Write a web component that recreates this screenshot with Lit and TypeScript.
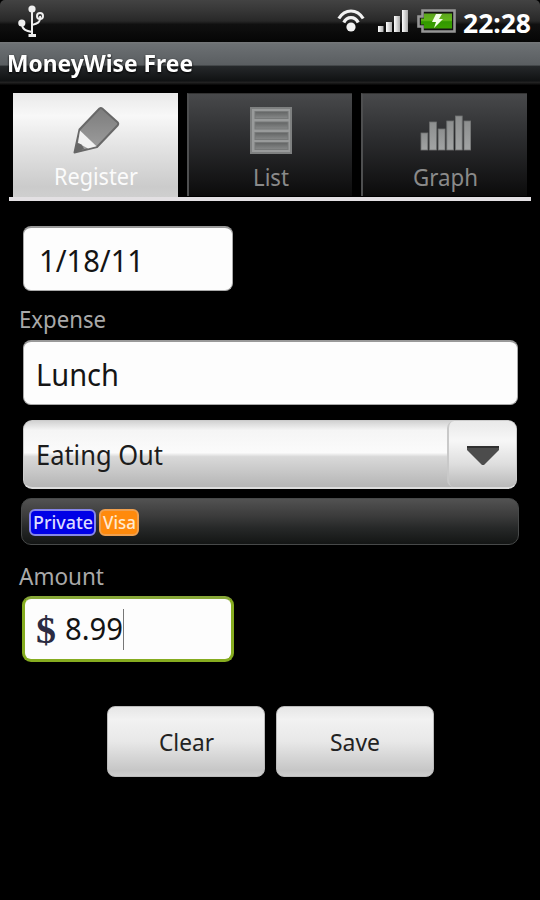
import { LitElement, html, css, svg } from "lit";
import { customElement, property } from "lit/decorators.js";

/** One line of text set to a given advance width; the box is cap-height tall. */
@customElement("fit-label")
class FitLabel extends LitElement {
  @property() text = "";
  @property({ type: Number }) width = 0;
  @property({ type: Number }) size = 24;

  static styles = css`
    :host { display: block; flex: none; line-height: 0; }
    svg { display: block; overflow: visible; }
    text { fill: currentColor; }
  `;

  render() {
    const cap = Math.round(this.size * 0.72);
    return html`<svg width=${this.width} height=${cap}>
      <text x="0" y=${cap} font-size=${this.size} textLength=${this.width} lengthAdjust="spacingAndGlyphs">${this.text}</text>
    </svg>`;
  }
}

const label = (text: string, width: number, size: number) =>
  html`<fit-label .text=${text} .width=${width} .size=${size}></fit-label>`;

@customElement("app-root")
export class AppRoot extends LitElement {
  static styles = css`
    :host {
      display: block; width: 540px; height: 900px; background: #000; overflow: hidden;
      font-family: "Noto Sans", "Open Sans", sans-serif;
    }
    * { box-sizing: border-box; }
    svg { display: block; flex: none; }
    .status {
      height: 42px; display: flex; align-items: center; padding: 0 9px 0 18px;
      border-radius: 5px 5px 0 0; color: #fff; font-weight: 700;
      background: linear-gradient(#434343 0, #373737 24%, #282828 50%, #101010 58%, #050505 100%);
    }
    .spacer { flex: 1; }
    .clock { padding: 4px 0 0 7px; }
    .title {
      height: 43px; display: flex; align-items: center; padding: 0 8px 0 7px; color: #fff; font-weight: 700;
      background: linear-gradient(#77797b 0, #6c7073 5%, #5a5e61 53%, #25282a 57%, #101213 90%, #222 94%, #050505 100%);
      filter: none;
    }
    .title fit-label { filter: drop-shadow(0 1px 1px #000); }
    .tabs {
      margin: 8px 9px 0; height: 108px; padding: 0 4px; display: flex; gap: 9px;
      border-bottom: 4px solid #e3e0e3;
    }
    .tab {
      flex: 1; height: 103px; display: flex; flex-direction: column; align-items: center; color: #8a8a8a;
      background: linear-gradient(#48494b, #2d2e30 42%, #141415 85%, #0b0b0b);
      border-top: 1px solid #333; border-left: 2px solid #4e4f50;
    }
    .tab.active {
      height: 104px; color: #fbfbfb; border: 0; padding-left: 1px;
      background: linear-gradient(#e9e9e9, #f8f8f8 22%, #e8e8e8 45%, #cbcbcb 90%, #cfcfcf);
    }
    .tab .icon { height: 75px; padding-top: 12px; }
    .form { padding: 25px 21px 0 22px; display: flex; flex-direction: column; }
    .field {
      height: 65px; margin-left: 1px; display: flex; align-items: center; background: #fdfdfd; color: #141414;
      border: 1px solid #a9a9a9; border-top: 2px solid #999; border-radius: 8px; padding: 3px 0 0 12px;
    }
    .short { width: 210px; padding-left: 15px; }
    .wide { width: 495px; }
    .caption { margin-left: -3px; color: #a9a9a9; }
    .expense { padding: 20px 0 12px; }
    .amount { padding: 23px 0 11px; }
    .select {
      margin: 15px 0 0 1px; width: 494px; height: 69px; display: flex; border-radius: 9px; overflow: hidden;
      border: 1px solid #ccc; border-bottom: 2px solid #dcdcdc; color: #1c1c1c;
      background: linear-gradient(#d2d2d2 0, #f5f5f5 14%, #fbfbfb 48%, #d9d9d9 54%, #b5b5b5 100%);
    }
    .value { flex: 1; display: flex; align-items: center; padding: 2px 0 0 12px; }
    .arrow {
      width: 69px; display: flex; align-items: center; justify-content: center; padding-top: 3px;
      border-left: 2px solid #c9c9c9; border-radius: 7px 0 0 7px;
      background: linear-gradient(#e9e9e9, #f7f7f7 30%, #dedede 65%, #b9b9b9);
    }
    .tags {
      margin: 9px 0 0 -1px; width: 498px; height: 47px; display: flex; gap: 3px; padding: 10px 0 0 7px;
      border: 1px solid #474949; border-radius: 10px;
      background: linear-gradient(#525252, #3b3b3b 38%, #262828 65%, #131514);
    }
    .tag {
      height: 27px; display: flex; align-items: center; justify-content: center; border-radius: 6px; font-weight: 500;
    }
    .private { width: 67px; background: #0000e6; border: 2px solid #8686e8; color: #dcdcff; }
    .visa { width: 40px; background: #ff8a0c; border: 2px solid #f0a04e; color: #ffe9d0; }
    .focused {
      margin-left: 0; width: 212px; height: 66px; border: 3px solid #86ac20; border-top-color: #88a838;
      padding: 0 0 0 11px; border-radius: 9px;
    }
    .dollar { font-family: "Liberation Serif", serif; font-weight: 700; color: #2b2b42; margin-right: 9px; padding-top: 0; }
    .caret { width: 1px; height: 41px; background: #777; }
    .actions { display: flex; gap: 11px; padding: 44px 0 0 85px; }
    .button {
      width: 158px; height: 71px; display: flex; align-items: center; justify-content: center; color: #222;
      border: 1px solid #bbb; border-radius: 8px; padding-top: 1px;
      background: linear-gradient(#e6e6e6, #f2f2f2 18%, #e8e8e8 50%, #c6c6c6 92%, #cecece);
    }
  `;

  private usb = svg`<svg width="27" height="34" viewBox="0 0 27 34" fill="none" stroke="#eee" stroke-width="2">
    <path d="M14 5V31M4 20C4 26 9 27 14 28M22 12C23 19 18 20 14 21" />
    <circle cx="14" cy="5" r="3.6" fill="#eee" stroke="none"/>
    <circle cx="3.8" cy="19" r="3.6" fill="#eee" stroke="none"/>
    <circle cx="22" cy="12" r="3"/>
    <path d="M10.5 31.5h7.5" stroke-width="3"/>
  </svg>`;

  private wifi = svg`<svg width="28" height="24" viewBox="0 0 28 24" fill="none" stroke="#f2f2f2" stroke-width="3.2">
    <path d="M1.8 9.5C8 -0.5 20 -0.5 26.2 9.5"/>
    <path d="M6.8 13.5C10 7 18 7 21.2 13.5"/>
    <circle cx="14" cy="18" r="4.6" fill="#f2f2f2" stroke="none"/>
  </svg>`;

  private signal = svg`<svg width="31" height="24" viewBox="0 0 31 24">
    <defs><linearGradient id="s" x1="0" x2="1"><stop offset="0" stop-color="#fff"/><stop offset="1" stop-color="#aaa"/></linearGradient></defs>
    <path fill="url(#s)" d="M0 17h5.5v6H0z"/><path fill="url(#s)" d="M8 13h6v10H8z"/>
    <path fill="url(#s)" d="M16 7h6v16h-6z"/><path fill="url(#s)" d="M24 1h6v22h-6z"/>
  </svg>`;

  private battery = svg`<svg width="39" height="24" viewBox="0 0 39 24">
    <defs><linearGradient id="b" x2="0" y2="1"><stop offset="0" stop-color="#5ca51c"/><stop offset=".45" stop-color="#62b61a"/><stop offset=".55" stop-color="#329800"/><stop offset="1" stop-color="#3ba000"/></linearGradient></defs>
    <path d="M5.5 1.5H37.5V22.5H5.5V17.5H1.5V7.5H5.5Z" fill="#131313" stroke="#969696" stroke-width="2.6"/>
    <path d="M7 4.5H35V19.5H7V15.5H4V9.5H7Z" fill="url(#b)"/>
    <path d="M19 5h6l-3 5h4l-9 9 2-6h-4z" fill="#f4ffe8"/>
  </svg>`;

  private pencil = svg`<svg width="48" height="50" viewBox="0 0 48 50">
    <defs>
      <linearGradient id="p" x2="0" y2="1"><stop offset="0" stop-color="#7c7c7c"/><stop offset="1" stop-color="#a0a0a0"/></linearGradient>
    </defs>
    <path d="M7.5 24.5L27.5 3.5Q29 2.5 30.5 3.8L45.8 17.5Q46.8 19 45.5 20.5L25 42L2.5 47.5Z" fill="url(#p)" stroke="#686868" stroke-width="2" stroke-linejoin="round"/>
    <path d="M8 25.5L24.5 41.2L16 43.5L6 38Z" fill="#f1f1f1"/>
    <path d="M5 38Q10 38 12 44L2.5 47.5Z" fill="#666"/>
  </svg>`;

  private list = svg`<svg width="42" height="48" viewBox="0 0 42 48">
    <defs><linearGradient id="r" x2="0" y2="1"><stop offset="0" stop-color="#626464"/><stop offset="1" stop-color="#878989"/></linearGradient></defs>
    <path d="M1 2H41V47H1Z" fill="#999b9b" stroke="#7e8080" stroke-width="2"/>
    ${[5.5, 16, 26.5, 36.5].map((y) => svg`<rect x="5" y=${y} width="33" height="7" fill="url(#r)" stroke="#777979" stroke-width="1"/>`)}
  </svg>`;

  private graph = svg`<svg width="51" height="48" viewBox="0 0 51 48">
    <defs><linearGradient id="g" x2="0" y2="1"><stop offset="0" stop-color="#8d8f8f"/><stop offset="1" stop-color="#a2a4a4"/></linearGradient></defs>
    ${[27, 16, 23, 15, 10, 15].map((y, i) => svg`<rect x=${1 + i * 8.6} y=${y} width="6.8" height=${44 - y} fill="url(#g)" stroke="#707272" stroke-width=".8"/>`)}
  </svg>`;

  render() {
    return html`
      <div class="status">
        ${this.usb}<span class="spacer"></span>
        <svg width="41" height="24">${this.wifi}</svg>
        ${this.signal}<svg width="8" height="24"></svg>${this.battery}
        <div class="clock">${label("22:28", 68, 26)}</div>
      </div>
      <div class="title">${label("MoneyWise Free", 186, 23)}</div>
      <div class="tabs">
        <div class="tab active"><div class="icon">${this.pencil}</div>${label("Register", 84, 24)}</div>
        <div class="tab"><div class="icon">${this.list}</div>${label("List", 36, 24)}</div>
        <div class="tab"><div class="icon">${this.graph}</div>${label("Graph", 65, 24)}</div>
      </div>
      <div class="form">
        <div class="field short">${label("1/18/11", 105, 30)}</div>
        <div class="caption expense">${label("Expense", 87, 24)}</div>
        <div class="field wide">${label("Lunch", 83, 30)}</div>
        <div class="select">
          <div class="value">${label("Eating Out", 127, 26.5)}</div>
          <div class="arrow"><svg width="34" height="21" viewBox="0 0 34 21"><path d="M1 1H33V5L18 20H16L1 5Z" fill="#4c4c4c"/><path d="M1 1H33V3H1Z" fill="#303030"/></svg></div>
        </div>
        <div class="tags">
          <div class="tag private">${label("Private", 60, 18)}</div>
          <div class="tag visa">${label("Visa", 33, 18)}</div>
        </div>
        <div class="caption amount">${label("Amount", 85, 24)}</div>
        <div class="field focused">
          <div class="dollar">${label("$", 20, 37)}</div>
          ${label("8.99", 58, 30)}<span class="caret"></span>
        </div>
        <div class="actions">
          <div class="button">${label("Clear", 55, 24)}</div>
          <div class="button">${label("Save", 50, 24)}</div>
        </div>
      </div>
    `;
  }
}
